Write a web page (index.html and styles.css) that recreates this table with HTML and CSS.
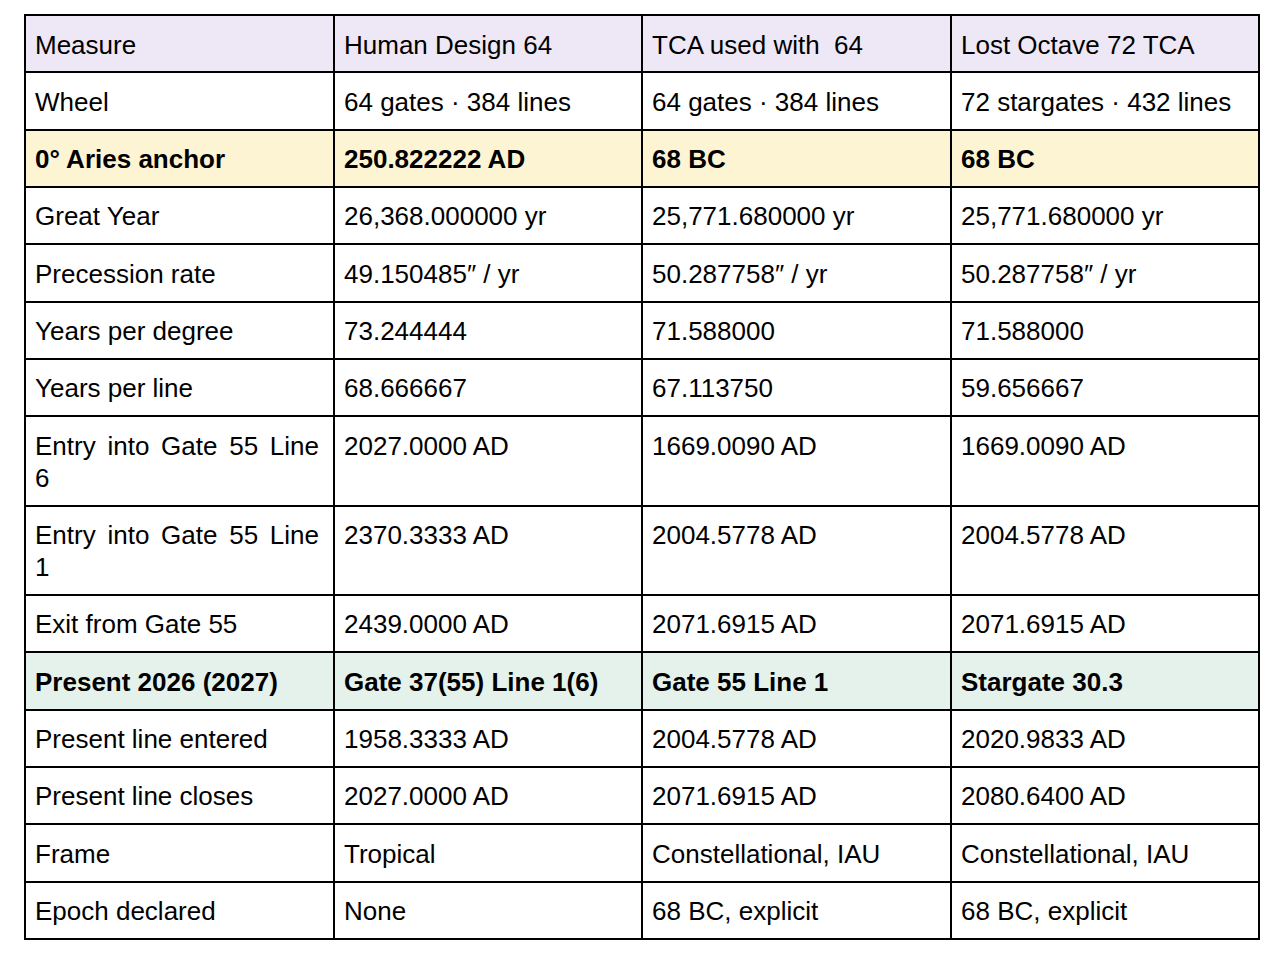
FILE: index.html
```html
<!DOCTYPE html>
<html lang="en">
<head>
<meta charset="utf-8">
<title>Human Design vs TCA comparison</title>
<link rel="stylesheet" href="styles.css">
</head>
<body>
<div class="page">
<table class="compare">
  <colgroup>
    <col class="wide"><col class="narrow"><col class="wide"><col class="narrow">
  </colgroup>
  <tbody>
    <tr class="head"><td>Measure</td><td>Human Design 64</td><td>TCA used with&nbsp; 64</td><td>Lost Octave 72 TCA</td></tr>
    <tr><td>Wheel</td><td>64 gates · 384 lines</td><td>64 gates · 384 lines</td><td>72 stargates · 432 lines</td></tr>
    <tr class="anchor"><td>0° Aries anchor</td><td>250.822222 AD</td><td>68 BC</td><td>68 BC</td></tr>
    <tr><td>Great Year</td><td>26,368.000000 yr</td><td>25,771.680000 yr</td><td>25,771.680000 yr</td></tr>
    <tr><td>Precession rate</td><td>49.150485″ / yr</td><td>50.287758″ / yr</td><td>50.287758″ / yr</td></tr>
    <tr><td>Years per degree</td><td>73.244444</td><td>71.588000</td><td>71.588000</td></tr>
    <tr><td>Years per line</td><td>68.666667</td><td>67.113750</td><td>59.656667</td></tr>
    <tr><td>Entry into Gate 55 Line 6</td><td>2027.0000 AD</td><td>1669.0090 AD</td><td>1669.0090 AD</td></tr>
    <tr><td>Entry into Gate 55 Line 1</td><td>2370.3333 AD</td><td>2004.5778 AD</td><td>2004.5778 AD</td></tr>
    <tr><td>Exit from Gate 55</td><td>2439.0000 AD</td><td>2071.6915 AD</td><td>2071.6915 AD</td></tr>
    <tr class="present"><td>Present 2026 (2027)</td><td>Gate 37(55) Line 1(6)</td><td>Gate 55 Line 1</td><td>Stargate 30.3</td></tr>
    <tr><td>Present line entered</td><td>1958.3333 AD</td><td>2004.5778 AD</td><td>2020.9833 AD</td></tr>
    <tr><td>Present line closes</td><td>2027.0000 AD</td><td>2071.6915 AD</td><td>2080.6400 AD</td></tr>
    <tr><td>Frame</td><td>Tropical</td><td>Constellational, IAU</td><td>Constellational, IAU</td></tr>
    <tr><td>Epoch declared</td><td>None</td><td>68 BC, explicit</td><td>68 BC, explicit</td></tr>
  </tbody>
</table>
</div>
</body>
</html>
```

FILE: styles.css
```css
html, body {
  margin: 0;
  padding: 0;
  background: #ffffff;
}

.page {
  padding: 14px 0 0 24px;
}

.compare {
  table-layout: fixed;
  width: 1236px;
  border-collapse: separate;
  border-spacing: 0;
  border-top: 2px solid #000;
  border-left: 2px solid #000;
  font-family: "Liberation Sans", Arial, Helvetica, sans-serif;
  font-size: 26px;
  line-height: 32px;
  color: #000;
}

.compare col.wide { width: 309px; }
.compare col.narrow { width: 308px; }

.compare td {
  box-sizing: border-box;
  border-right: 2px solid #000;
  border-bottom: 2px solid #000;
  padding: 12.5px 14px 10.83px 9px;
  vertical-align: top;
  text-align: justify;
  font-weight: normal;
}

.compare .head td { background: #eee8f6; }
.compare .anchor td { background: #fdf4d4; font-weight: bold; }
.compare .present td { background: #e5f2ec; font-weight: bold; }
```
